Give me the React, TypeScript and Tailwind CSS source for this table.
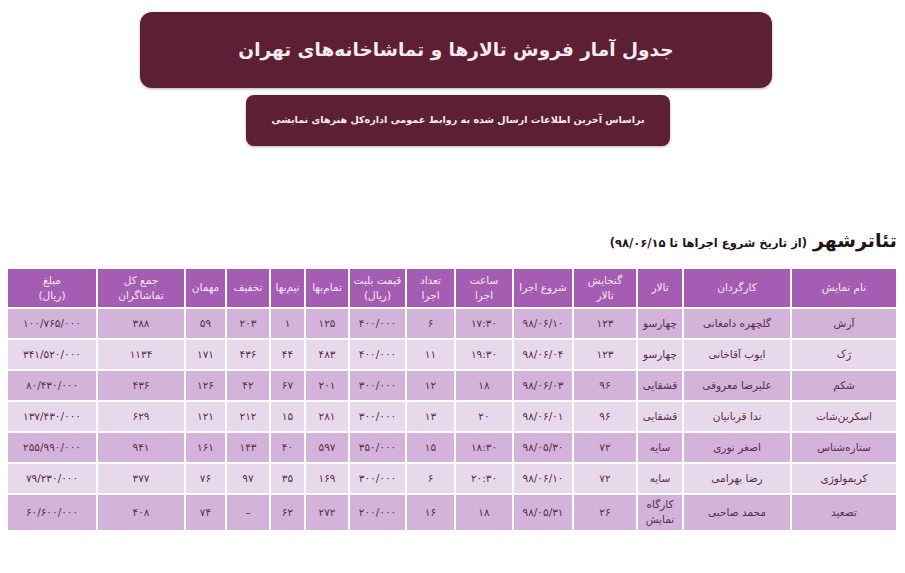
import React from 'react';

const headers: { label: React.ReactNode; w: string }[] = [
  { label: 'نام نمایش', w: 'w-[104px]' },
  { label: 'کارگردان', w: 'w-[106px]' },
  { label: 'تالار', w: 'w-[44px]' },
  { label: <>گنجایش<br />تالار</>, w: 'w-[62px]' },
  { label: 'شروع اجرا', w: 'w-[58px]' },
  { label: <>ساعت<br />اجرا</>, w: 'w-[56px]' },
  { label: <>تعداد<br />اجرا</>, w: 'w-[47px]' },
  { label: <>قیمت بلیت<br />(ریال)</>, w: 'w-[55px]' },
  { label: 'تمام‌بها', w: 'w-[42px]' },
  { label: 'نیم‌بها', w: 'w-[33px]' },
  { label: 'تخفیف', w: 'w-[42px]' },
  { label: 'مهمان', w: 'w-[39px]' },
  { label: <>جمع کل<br />تماشاگران</>, w: 'w-[86px]' },
  { label: <>مبلغ<br />(ریال)</>, w: 'w-[88px]' },
];

const rows: React.ReactNode[][] = [
  ['آرش', 'گلچهره دامغانی', 'چهارسو', '۱۲۳', '۹۸/۰۶/۱۰', '۱۷:۳۰', '۶', '۴۰۰/۰۰۰', '۱۲۵', '۱', '۲۰۳', '۵۹', '۳۸۸', '۱۰۰/۷۶۵/۰۰۰'],
  ['رَک', 'ایوب آقاخانی', 'چهارسو', '۱۲۳', '۹۸/۰۶/۰۴', '۱۹:۳۰', '۱۱', '۴۰۰/۰۰۰', '۴۸۳', '۴۴', '۴۳۶', '۱۷۱', '۱۱۳۴', '۳۴۱/۵۲۰/۰۰۰'],
  ['شکم', 'علیرضا معروفی', 'قشقایی', '۹۶', '۹۸/۰۶/۰۳', '۱۸', '۱۲', '۳۰۰/۰۰۰', '۲۰۱', '۶۷', '۴۲', '۱۲۶', '۴۳۶', '۸۰/۴۳۰/۰۰۰'],
  ['اسکرین‌شات', 'ندا قربانیان', 'قشقایی', '۹۶', '۹۸/۰۶/۰۱', '۲۰', '۱۳', '۳۰۰/۰۰۰', '۲۸۱', '۱۵', '۲۱۲', '۱۲۱', '۶۲۹', '۱۳۷/۴۳۰/۰۰۰'],
  ['ستاره‌شناس', 'اصغر نوری', 'سایه', '۷۲', '۹۸/۰۵/۳۰', '۱۸:۳۰', '۱۵', '۳۵۰/۰۰۰', '۵۹۷', '۴۰', '۱۴۳', '۱۶۱', '۹۴۱', '۲۵۵/۹۹۰/۰۰۰'],
  ['کریمولوژی', 'رضا بهرامی', 'سایه', '۷۲', '۹۸/۰۶/۱۰', '۲۰:۳۰', '۶', '۳۰۰/۰۰۰', '۱۶۹', '۳۵', '۹۷', '۷۶', '۳۷۷', '۷۹/۲۳۰/۰۰۰'],
  ['تصعید', 'محمد صاحبی', <>کارگاه<br />نمایش</>, '۲۶', '۹۸/۰۵/۳۱', '۱۸', '۱۶', '۲۰۰/۰۰۰', '۲۷۲', '۶۲', '–', '۷۴', '۴۰۸', '۶۰/۶۰۰/۰۰۰'],
];

export default function App() {
  return (
    <div className="w-[905px] h-[573px] bg-white overflow-hidden font-['DejaVu_Sans',sans-serif]">
      <div className="flex flex-col items-start pt-3">
        <div className="ml-[140px] w-[632px] h-[76px] rounded-xl bg-[#5c1f33] flex items-center justify-center shadow-[0_1px_3px_rgba(0,0,0,0.3)]">
          <h1 dir="rtl" className="text-[18.5px] font-bold text-[#f6eaf0] whitespace-nowrap">جدول آمار فروش تالارها و تماشاخانه‌های تهران</h1>
        </div>
        <div className="ml-[246px] mt-[7px] w-[424px] h-[51px] rounded-lg bg-[#5c1f33] flex items-center justify-center shadow-[0_1px_3px_rgba(0,0,0,0.3)]">
          <p dir="rtl" className="text-[9.6px] font-bold text-[#f6eaf0] whitespace-nowrap">براساس آخرین اطلاعات ارسال شده به روابط عمومی اداره‌کل هنرهای نمایشی</p>
        </div>
      </div>

      <div dir="rtl" className="mt-[80px] pr-[8px] flex items-baseline gap-1.5 text-[#1f1419]">
        <span className="text-[19px] font-bold">تئاترشهر</span>
        <span className="text-[11.5px] font-bold">(از تاریخ شروع اجراها تا ۹۸/۰۶/۱۵)</span>
      </div>

      <div className="mt-[12px] ml-[6px]">
        <table dir="rtl" className="w-[892px] table-fixed border-separate border-spacing-[2px] text-[10.5px] text-[#5a2d4c]">
          <thead>
            <tr className="h-[38px]">
              {headers.map((h, i) => (
                <th key={i} className={`${h.w} bg-[#a55db4] text-[#f7e8f5] font-normal leading-[15px] align-middle text-center`}>
                  {h.label}
                </th>
              ))}
            </tr>
          </thead>
          <tbody>
            {rows.map((r, ri) => (
              <tr key={ri} className={ri === rows.length - 1 ? 'h-[35px]' : 'h-[29px]'}>
                {r.map((c, ci) => (
                  <td key={ci} className={`${ri % 2 === 0 ? 'bg-[#d3b3da]' : 'bg-[#e7d9eb]'} text-center align-middle leading-[15px]`}>
                    {c}
                  </td>
                ))}
              </tr>
            ))}
          </tbody>
        </table>
      </div>
    </div>
  );
}
